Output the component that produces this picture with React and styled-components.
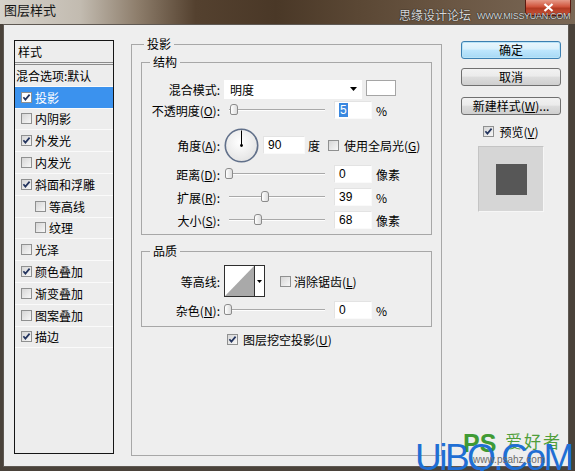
import React from 'react'
import styled, { createGlobalStyle } from 'styled-components'

const GlobalStyle = createGlobalStyle`
  html, body { margin: 0; padding: 0; }
  body {
    width: 575px;
    height: 471px;
    overflow: hidden;
    font-family: "Noto Sans CJK SC", "Liberation Sans", sans-serif;
    font-size: 12px;
    color: #000;
  }
`

const Window = styled.div`
  position: relative;
  width: 575px;
  height: 471px;
  display: flex;
  flex-direction: column;
  background: #4a423a;
  overflow: hidden;
`

const TitleBar = styled.div`
  height: 24px;
  flex: none;
  display: flex;
  align-items: flex-start;
  padding-left: 4px;
  background: linear-gradient(90deg, #d6d2cb 0%, #c2bbb0 14%, #8d7d6b 24%, #54412f 34%, #4a3827 48%, #5a4734 62%, #6a5643 78%, #7a6856 100%);
`

const Title = styled.div`
  font-size: 13px;
  line-height: 20px;
  color: #151515;
`

const CloseButton = styled.div`
  margin-left: auto;
  margin-right: 4px;
  width: 44px;
  height: 15px;
  border: 1px solid #5a1a10;
  border-top: none;
  border-radius: 0 0 5px 5px;
  background: linear-gradient(#e59a88 0%, #d0543c 45%, #b23a22 55%, #c9553a 100%);
  display: flex;
  align-items: center;
  justify-content: center;
`

const TitleMark = styled.div`
  position: absolute;
  left: 399px;
  top: 7px;
  display: flex;
  align-items: center;
  gap: 6px;
  color: #d8d8d8;
  text-shadow: 0 0 1px #1e1e1e, 0 0 1px #1e1e1e;
  white-space: nowrap;
`

const TitleMarkCn = styled.span`
  font-size: 12px;
  line-height: 14px;
`

const TitleMarkEn = styled.span`
  font-family: "Liberation Sans", sans-serif;
  font-size: 9px;
  letter-spacing: -0.3px;
  line-height: 14px;
  margin-top: 2px;
`

const Body = styled.div`
  flex: 1;
  margin: 0 6px 4px 3px;
  background: #eeeeee;
  border: 1px solid #5e5852;
  display: flex;
  align-items: flex-start;
`

/* ---------- left style list ---------- */

const StylePanel = styled.div`
  box-sizing: border-box;
  width: 100px;
  height: 414px;
  margin: 15px 0 0 10px;
  border: 1px solid #151515;
  background: #ededed;
`

const PanelHeader = styled.div`
  height: 21px;
  line-height: 21px;
  padding-left: 3px;
  border-bottom: 3px double #8c8c8c;
`

const StyleRow = styled.div`
  box-sizing: border-box;
  height: 21.8px;
  display: flex;
  align-items: center;
  gap: 3px;
  padding-left: ${p => (p.$plain ? 1 : p.$indent ? 20 : 6)}px;
  background: ${p => (p.$active ? '#3b92ee' : 'transparent')};
  color: ${p => (p.$active ? '#fff' : '#000')};
  border-bottom: 1px solid #fafafa;
  white-space: nowrap;
`

const Box = styled.span`
  box-sizing: border-box;
  flex: none;
  width: 11px;
  height: 11px;
  border: 1px solid #8f9090;
  background: ${p => (p.$white ? '#fff' : 'linear-gradient(135deg, #d6d6d6, #f7f7f7)')};
  display: inline-flex;
  align-items: center;
  justify-content: center;
`

const Check = ({ on, white }) => (
  <Box $white={white}>
    {on && (
      <svg width="9" height="9" viewBox="0 0 9 9">
        <path d="M1.4 4.3 L3.4 6.6 L7.6 1.6" stroke="#23345e" strokeWidth="1.7" fill="none" />
      </svg>
    )}
  </Box>
)

const layers = [
  { label: '混合选项:默认', plain: true },
  { label: '投影', checked: true, active: true },
  { label: '内阴影' },
  { label: '外发光', checked: true },
  { label: '内发光' },
  { label: '斜面和浮雕', checked: true },
  { label: '等高线', indent: true },
  { label: '纹理', indent: true },
  { label: '光泽' },
  { label: '颜色叠加', checked: true },
  { label: '渐变叠加' },
  { label: '图案叠加' },
  { label: '描边', checked: true },
]

/* ---------- middle settings ---------- */

const Group = styled.fieldset`
  box-sizing: border-box;
  min-width: 0;
  margin: 0;
  padding: 0 0 ${p => p.$pb || 0}px;
  border: 1px solid #a7a7a7;
`

const OuterGroup = styled(Group)`
  width: 311px;
  height: 420px;
  margin: 11px 0 0 17px;
`

const InnerGroup = styled(Group)`
  margin: ${p => p.$mt}px 9px 0;
`

const Legend = styled.legend`
  padding: 0 3px;
  margin-left: ${p => p.$indent}px;
  font-size: 12px;
  line-height: 16px;
`

const Row = styled.div`
  display: flex;
  align-items: center;
  height: ${p => p.$h}px;
  margin-top: ${p => p.$mt}px;
  padding-left: ${p => p.$pl || 0}px;
  white-space: nowrap;
`

const Label = styled.span`
  flex: none;
  width: 78px;
  margin-right: 4px;
  text-align: right;
`

const SelectBox = styled.div`
  box-sizing: border-box;
  width: 138px;
  height: 19px;
  background: #fff;
  display: flex;
  align-items: center;
  justify-content: space-between;
  padding: 0 5px 0 6px;
`

const Swatch = styled.div`
  box-sizing: border-box;
  width: 30px;
  height: 16px;
  margin: 0 0 3px 4px;
  border: 1px solid #a5a5a5;
  background: #fff;
`

const Track = styled.div`
  position: relative;
  flex: none;
  width: 96px;
  height: 0;
  margin-left: 5px;
  border-top: 1px solid #a9a9a9;
  border-bottom: 1px solid #fdfdfd;
`

const Thumb = styled.span`
  position: absolute;
  top: -6px;
  left: ${p => p.$pos}px;
  box-sizing: border-box;
  width: 8px;
  height: 11px;
  border: 1px solid #8b8b8b;
  border-radius: 3px 3px 2px 2px;
  background: linear-gradient(90deg, #ffffff, #dcdcdc);
`

const NumField = styled.div`
  box-sizing: border-box;
  flex: none;
  width: ${p => p.$w || 38}px;
  height: 18px;
  margin-left: ${p => p.$ml ?? 9}px;
  padding-left: 4px;
  background: #fff;
  border: 1px solid;
  border-color: #e3e3e3 #fafafa #fafafa #e3e3e3;
  line-height: 16px;
  font-family: "Liberation Sans", sans-serif;
`

const Picked = styled.span`
  background: #3a88e0;
  color: #fff;
  padding: 0 1px;
`

const Unit = styled.span`
  margin-left: ${p => p.$ml || 4}px;
`

const Contour = styled.div`
  box-sizing: border-box;
  display: flex;
  width: 41px;
  height: 32px;
  border: 1px solid #2e2e2e;
  background: #fff;
`

const ContourArrow = styled.div`
  flex: 1;
  border-left: 1px solid #2e2e2e;
  display: flex;
  align-items: center;
  justify-content: center;
`

const Option = styled.label`
  display: flex;
  align-items: center;
  gap: ${p => p.$gap || 5}px;
  margin-left: ${p => p.$ml || 0}px;
`

const Arrow = () => (
  <svg width="7" height="4" viewBox="0 0 7 4">
    <path d="M0 0 H7 L3.5 4 Z" fill="#000" />
  </svg>
)

const Slider = ({ pos }) => (
  <Track>
    <Thumb $pos={pos} />
  </Track>
)

/* ---------- right column ---------- */

const Side = styled.div`
  width: 100px;
  margin: 16px 0 0 19px;
  display: flex;
  flex-direction: column;
  align-items: center;
`

const Button = styled.div`
  box-sizing: border-box;
  width: 100px;
  height: 18px;
  margin-top: ${p => p.$mt || 0}px;
  border: 1px solid ${p => (p.$primary ? '#3c7fb1' : '#707070')};
  border-radius: 3px;
  background: ${p =>
    p.$primary
      ? 'linear-gradient(#eaf6fd 0%, #d9f0fc 45%, #bee6fd 50%, #a7d9f5 100%)'
      : 'linear-gradient(#f2f2f2 0%, #ebebeb 45%, #dddddd 50%, #cfcfcf 100%)'};
  box-shadow: ${p => (p.$primary ? '0 0 0 1px #b9e3f7 inset' : 'none')};
  text-align: center;
  line-height: 16px;
  white-space: nowrap;
`

const Preview = styled.div`
  box-sizing: border-box;
  width: 66px;
  height: 66px;
  margin-top: 8px;
  border: 1px solid;
  border-color: #c4c4c4 #f6f6f6 #f6f6f6 #c4c4c4;
  background: #d6d6d6;
  display: flex;
  align-items: center;
  justify-content: center;
`

const PreviewSquare = styled.div`
  width: 31px;
  height: 31px;
  background: #575757;
`

/* ---------- site watermark ---------- */

const SiteMark = styled.div`
  position: absolute;
  left: 410px;
  top: 428px;
  width: 165px;
  height: 43px;
  pointer-events: none;
`

const MarkPiece = styled.span`
  position: absolute;
  left: ${p => p.$x}px;
  top: ${p => p.$y}px;
  white-space: nowrap;
`

const BigMark = styled(MarkPiece)`
  font-family: "Liberation Sans", sans-serif;
  font-size: 37px;
  line-height: 37px;
  letter-spacing: -2.5px;
  color: #1f6fd4;
`

const PsMark = styled(MarkPiece)`
  font-family: "Liberation Sans", sans-serif;
  font-weight: bold;
  font-size: 25px;
  line-height: 25px;
  color: #3f9a34;
`

const CnMark = styled(MarkPiece)`
  font-size: 17px;
  line-height: 20px;
  letter-spacing: 2px;
  color: #4f9e3a;
`

const UrlMark = styled(MarkPiece)`
  font-family: "Liberation Sans", sans-serif;
  font-size: 10px;
  line-height: 10px;
  color: #6b6b6b;
`

const Dial = () => (
  <svg width="35" height="35" viewBox="0 0 35 35">
    <defs>
      <radialGradient id="dialFill" cx="0.45" cy="0.4" r="0.6">
        <stop offset="0" stopColor="#ffffff" />
        <stop offset="1" stopColor="#e4e4e4" />
      </radialGradient>
    </defs>
    <circle cx="17.5" cy="17.5" r="16.2" fill="url(#dialFill)" stroke="#61708a" strokeWidth="1.6" />
    <line x1="17.5" y1="17.5" x2="17.5" y2="2.5" stroke="#000" strokeWidth="1" />
    <circle cx="17.5" cy="17.5" r="1.4" fill="#000" />
  </svg>
)

export default function App() {
  return (
    <>
      <GlobalStyle />
      <Window>
        <TitleBar>
          <Title>图层样式</Title>
          <CloseButton>
            <svg width="11" height="9" viewBox="0 0 11 9">
              <path d="M1.5 1 L9.5 8 M9.5 1 L1.5 8" stroke="#fff" strokeWidth="2.2" />
            </svg>
          </CloseButton>
        </TitleBar>
        <TitleMark>
          <TitleMarkCn>思缘设计论坛</TitleMarkCn>
          <TitleMarkEn>WWW.MISSYUAN.COM</TitleMarkEn>
        </TitleMark>

        <Body>
          <StylePanel>
            <PanelHeader>样式</PanelHeader>
            {layers.map(l => (
              <StyleRow key={l.label} $plain={l.plain} $indent={l.indent} $active={l.active}>
                {!l.plain && <Check on={l.checked} white={l.active} />}
                <span>{l.label}</span>
              </StyleRow>
            ))}
          </StylePanel>

          <OuterGroup>
            <Legend $indent={12}>投影</Legend>

            <InnerGroup $mt={2} $pb={5}>
              <Legend $indent={8}>结构</Legend>
              <Row $h={20} $mt={9}>
                <Label>混合模式:</Label>
                <SelectBox>
                  <span>明度</span>
                  <Arrow />
                </SelectBox>
                <Swatch />
              </Row>
              <Row $h={20} $mt={1}>
                <Label>不透明度(<u>O</u>):</Label>
                <Slider pos={1} />
                <NumField><Picked>5</Picked></NumField>
                <Unit>%</Unit>
              </Row>
              <Row $h={34} $mt={8}>
                <Label>角度(<u>A</u>):</Label>
                <Dial />
                <NumField $w={42} $ml={4}>90</NumField>
                <Unit $ml={3}>度</Unit>
                <Option $ml={8}>
                  <Check />
                  <span>使用全局光(<u>G</u>)</span>
                </Option>
              </Row>
              <Row $h={18} $mt={3}>
                <Label>距离(<u>D</u>):</Label>
                <Slider pos={-4} />
                <NumField>0</NumField>
                <Unit>像素</Unit>
              </Row>
              <Row $h={18} $mt={5}>
                <Label>扩展(<u>R</u>):</Label>
                <Slider pos={32} />
                <NumField>39</NumField>
                <Unit>%</Unit>
              </Row>
              <Row $h={18} $mt={5}>
                <Label>大小(<u>S</u>):</Label>
                <Slider pos={25} />
                <NumField>68</NumField>
                <Unit>像素</Unit>
              </Row>
            </InnerGroup>

            <InnerGroup $mt={8} $pb={7}>
              <Legend $indent={8}>品质</Legend>
              <Row $h={32} $mt={6}>
                <Label>等高线:</Label>
                <Contour>
                  <svg width="29" height="30" viewBox="0 0 29 30">
                    <path d="M0 30 L29 0 L29 30 Z" fill="#a9a9a9" />
                  </svg>
                  <ContourArrow>
                    <svg width="5" height="3" viewBox="0 0 5 3">
                      <path d="M0 0 H5 L2.5 3 Z" fill="#000" />
                    </svg>
                  </ContourArrow>
                </Contour>
                <Option $ml={15} $gap={3}>
                  <Check />
                  <span>消除锯齿(<u>L</u>)</span>
                </Option>
              </Row>
              <Row $h={18} $mt={4}>
                <Label>杂色(<u>N</u>):</Label>
                <Slider pos={-5} />
                <NumField>0</NumField>
                <Unit>%</Unit>
              </Row>
            </InnerGroup>

            <Row $h={14} $mt={5} $pl={95}>
              <Option $gap={5}>
                <Check on />
                <span>图层挖空投影(<u>U</u>)</span>
              </Option>
            </Row>
          </OuterGroup>

          <Side>
            <Button $primary>确定</Button>
            <Button $mt={9}>取消</Button>
            <Button $mt={11}>新建样式(<u>W</u>)...</Button>
            <Row $h={14} $mt={9}>
              <Option $gap={5}>
                <Check on />
                <span>预览(<u>V</u>)</span>
              </Option>
            </Row>
            <Preview>
              <PreviewSquare />
            </Preview>
          </Side>
        </Body>

        <SiteMark>
          <PsMark $x={53} $y={3}>PS</PsMark>
          <CnMark $x={95} $y={3}>爱好者</CnMark>
          <BigMark $x={5} $y={11}>UiBQ.CoM</BigMark>
          <UrlMark $x={63} $y={27}>www.psahz.com</UrlMark>
        </SiteMark>
      </Window>
    </>
  )
}
